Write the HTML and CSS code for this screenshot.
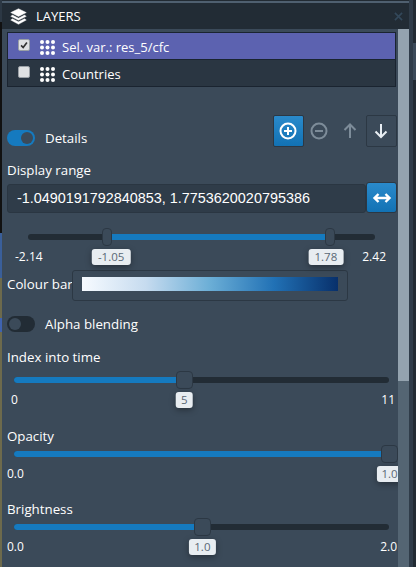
FILE: index.html
```html
<!DOCTYPE html>
<html lang="en">
    <head>
        <meta charset="UTF-8">
        <title>Layers</title>
        <link rel="stylesheet" href="styles.css">
    </head>
    <body>
        <div class="strip"></div>
        <div class="panel">
            <div class="head">
                <svg class="head-icon" viewBox="0 0 24 24"><g fill="#fff" stroke="#fff" stroke-width="0.6"><path d="M12 1 L23 6.5 L12 12 L1 6.5 Z"/><path d="M3.5 10 L12 14.3 L20.5 10 L23 11.8 L12 17.2 L1 11.8 Z"/><path d="M3.5 15.2 L12 19.5 L20.5 15.2 L23 17 L12 23 L1 17 Z"/></g></svg>
                <span class="head-title">LAYERS</span>
                <svg class="head-close" viewBox="0 0 10 10"><path d="M1 1 L9 9 M9 1 L1 9" stroke="#33485a" stroke-width="1.8"/></svg>
            </div>
            <div class="main">
                <div class="content">
                    <ul class="layers">
                        <li class="layer selected">
                            <span class="check"><svg viewBox="0 0 12 12"><path d="M2.5 6.5 L5 9 L9.5 3" fill="none" stroke="#333" stroke-width="2"/></svg></span>
                            <svg class="dots" viewBox="0 0 15 15"><g fill="#fff"><circle cx="2" cy="2" r="2"/><circle cx="7.5" cy="2" r="2"/><circle cx="13" cy="2" r="2"/><circle cx="2" cy="7.5" r="2"/><circle cx="7.5" cy="7.5" r="2"/><circle cx="13" cy="7.5" r="2"/><circle cx="2" cy="13" r="2"/><circle cx="7.5" cy="13" r="2"/><circle cx="13" cy="13" r="2"/></g></svg>
                            <span class="layer-name">Sel. var.: res_5/cfc</span>
                        </li>
                        <li class="layer">
                            <span class="check"></span>
                            <svg class="dots" viewBox="0 0 15 15"><g fill="#fff"><circle cx="2" cy="2" r="2"/><circle cx="7.5" cy="2" r="2"/><circle cx="13" cy="2" r="2"/><circle cx="2" cy="7.5" r="2"/><circle cx="7.5" cy="7.5" r="2"/><circle cx="13" cy="7.5" r="2"/><circle cx="2" cy="13" r="2"/><circle cx="7.5" cy="13" r="2"/><circle cx="13" cy="13" r="2"/></g></svg>
                            <span class="layer-name">Countries</span>
                        </li>
                    </ul>

                    <div class="tools">
                        <label class="switch-row">
                            <span class="switch on"></span>
                            <span>Details</span>
                        </label>
                        <div class="buttons">
                            <button class="tool primary"><svg viewBox="0 0 20 20"><circle cx="10" cy="10" r="7.5" fill="none" stroke="#fff" stroke-width="2"/><path d="M10 6 V14 M6 10 H14" stroke="#fff" stroke-width="2"/></svg></button>
                            <button class="tool flat"><svg viewBox="0 0 20 20"><circle cx="10" cy="10" r="7.5" fill="none" stroke="#7d8c99" stroke-width="2"/><path d="M6 10 H14" stroke="#7d8c99" stroke-width="2"/></svg></button>
                            <button class="tool flat"><svg viewBox="0 0 20 20"><path d="M10 17 V3.5 M4.5 9 L10 3.5 L15.5 9" fill="none" stroke="#7d8c99" stroke-width="2"/></svg></button>
                            <button class="tool outline"><svg viewBox="0 0 20 20"><path d="M10 3 V16 M4.5 10.5 L10 16 L15.5 10.5" fill="none" stroke="#e8eef3" stroke-width="2"/></svg></button>
                        </div>
                    </div>

                    <div class="label range-label">Display range</div>
                    <div class="range-row">
                        <div class="range-input">-1.0490191792840853, 1.7753620020795386</div>
                        <button class="range-btn"><svg viewBox="0 0 20 20"><path d="M3 10 H17 M6.5 6 L2.5 10 L6.5 14 M13.5 6 L17.5 10 L13.5 14" fill="none" stroke="#fff" stroke-width="2.4"/></svg></button>
                    </div>

                    <div class="slider slim">
                        <div class="track">
                            <div class="fill" style="left: 22.8%; width: 64.2%"></div>
                            <div class="thumb narrow" style="left: 22.8%"><span class="tip shift-right">-1.05</span></div>
                            <div class="thumb narrow" style="left: 87%"><span class="tip shift-left">1.78</span></div>
                        </div>
                        <div class="ends"><span>-2.14</span><span>2.42</span></div>
                    </div>

                    <div class="colour-row">
                        <span class="colour-label">Colour bar</span>
                        <div class="colour-box"><div class="colour-grad"></div></div>
                    </div>

                    <label class="switch-row alpha">
                        <span class="switch"></span>
                        <span>Alpha blending</span>
                    </label>

                    <div class="label time-label">Index into time</div>
                    <div class="slider wide">
                        <div class="track">
                            <div class="fill" style="left: 0; width: 45.3%"></div>
                            <div class="thumb" style="left: 45.3%"><span class="tip">5</span></div>
                        </div>
                        <div class="ends"><span>0</span><span>11</span></div>
                    </div>

                    <div class="label opacity-label">Opacity</div>
                    <div class="slider">
                        <div class="track">
                            <div class="fill" style="left: 0; width: 100%"></div>
                            <div class="thumb" style="left: 100%"><span class="tip">1.0</span></div>
                        </div>
                        <div class="ends"><span>0.0</span></div>
                    </div>

                    <div class="label bright-label">Brightness</div>
                    <div class="slider">
                        <div class="track">
                            <div class="fill" style="left: 0; width: 50.1%"></div>
                            <div class="thumb" style="left: 50.1%"><span class="tip">1.0</span></div>
                        </div>
                        <div class="ends"><span>0.0</span><span>2.0</span></div>
                    </div>
                </div>
                <div class="scrollbar"><div class="scroll-thumb"></div></div>
            </div>
        </div>
        <div class="gutter"></div>
    </body>
</html>
```

FILE: styles.css
```css
*{
    margin: 0;
    padding: 0;
    box-sizing: border-box;
}
html, body{
    height: 100%;
    overflow: hidden;
}
body{
    display: flex;
    background-color: #222b33;
    color: #fff;
    font-family: "Open Sans", "Noto Sans", sans-serif;
    font-size: 13px;
}
.strip{
    width: 2px;
    background: linear-gradient(#2c3844 0, #2c3844 22px, #111 22px, #111 233px, #3a5f9a 233px, #3a5f9a 278px, #6d6a4c 278px, #6d6a4c 318px, #3f63b0 318px, #3f63b0 332px, #6d6a4c 332px);
}
.panel{
    width: 407px;
    display: flex;
    flex-direction: column;
    background-color: #3b4a59;
    border-top: 1px solid #222b33;
}
.head{
    height: 28px;
    display: flex;
    align-items: center;
    padding: 0 6px 0 8px;
    background-color: #222c35;
    border-top: 2px solid #4f6070;
}
.head-icon{
    width: 17px;
    height: 17px;
}
.head-title{
    margin-left: 9px;
    font-size: 13px;
}
.head-close{
    width: 9px;
    height: 9px;
    margin-left: auto;
}
.main{
    flex: 1;
    display: flex;
    min-height: 0;
}
.content{
    width: 396px;
    overflow: hidden;
    padding: 3px 0 0 5px;
}
.scrollbar{
    width: 11px;
    background-color: #546573;
}
.scroll-thumb{
    height: 352px;
    background-color: #94a3af;
}
.gutter{
    flex: 1;
    background: linear-gradient(90deg, #2f3c49 0, #2f3c49 4px, transparent 4px), linear-gradient(#222b33 0, #222b33 43px, #3b4a59 43px, #3b4a59 80px, #222b33 80px);
}
.layers{
    list-style: none;
    width: 389px;
    border: 1px solid #1a2430;
}
.layer{
    height: 26px;
    display: flex;
    align-items: center;
    padding-left: 10px;
    background-color: #2a3642;
}
.layer + .layer{
    height: 27px;
    border-top: 1px solid #1a2430;
}
.layer.selected{
    background-color: #5c62b0;
}
.layer-name{
    padding-top: 2px;
}
.check{
    width: 12px;
    height: 12px;
    margin-top: -2px;
    background-color: #dfe1e3;
    border: 1px solid #9aa0a6;
    border-radius: 2px;
}
.check svg{
    display: block;
    width: 10px;
    height: 10px;
}
.dots{
    width: 15px;
    height: 15px;
    margin: 2px 7px 0 10px;
}
.tools{
    height: 32px;
    margin-top: 28px;
    display: flex;
    justify-content: space-between;
    align-items: flex-end;
    width: 390px;
}
.switch-row{
    display: flex;
    align-items: center;
    gap: 10px;
    font-size: 13.3px;
    line-height: 18px;
}
.switch{
    position: relative;
    width: 28px;
    height: 16px;
    border-radius: 8px;
    background-color: #222c35;
}
.switch::after{
    content: "";
    position: absolute;
    left: 2px;
    top: 2px;
    width: 12px;
    height: 12px;
    border-radius: 50%;
    background-color: #3b4a59;
}
.switch.on{
    background-color: #157abf;
}
.switch.on::after{
    left: 14px;
}
.buttons{
    display: flex;
}
.tool{
    width: 31px;
    height: 32px;
    padding-right: 1px;
    display: flex;
    align-items: center;
    justify-content: center;
    background: transparent;
    border: 1px solid transparent;
    border-radius: 2px;
}
.tool svg{
    width: 20px;
    height: 20px;
}
.tool.primary{
    background: linear-gradient(#2a8acb, #1272b4);
    border-color: #2c3844;
}
.tool.outline{
    border-color: #2c3844;
}
.label{
    font-size: 13.3px;
    line-height: 18px;
}
.range-label{
    margin-top: 14px;
}
.range-row{
    display: flex;
    align-items: flex-start;
    width: 390px;
    margin-top: 3px;
}
.range-input{
    width: 359px;
    height: 29px;
    line-height: 27px;
    padding-left: 9px;
    margin-top: 2px;
    background-color: #2f3c49;
    border: 1px solid #2a3642;
    border-radius: 3px;
    font-family: "Liberation Sans", Arial, sans-serif;
    font-size: 14.4px;
}
.range-btn{
    width: 31px;
    height: 31px;
    display: flex;
    align-items: center;
    justify-content: center;
    background: linear-gradient(#2a8acb, #1272b4);
    border: 1px solid #2c3844;
    border-radius: 3px;
}
.range-btn svg{
    width: 20px;
    height: 20px;
}
.slider{
    padding: 6px 0 0 7px;
    width: 382px;
}
.slider.wide{
    padding-top: 11px;
}
.slider.slim{
    padding: 21px 0 0 21px;
    width: 368px;
}
.track{
    position: relative;
    height: 6px;
    border-radius: 3px;
    background-color: #222c35;
}
.fill{
    position: absolute;
    top: 0;
    bottom: 0;
    border-radius: 3px;
    background-color: #157abf;
}
.thumb{
    position: absolute;
    top: -6px;
    width: 17px;
    height: 18px;
    margin-left: -8px;
    background-color: #3b4a59;
    border: 1px solid #2c3844;
    border-radius: 4px;
}
.thumb.narrow{
    width: 10px;
    margin-left: -5px;
}
.tip{
    position: absolute;
    top: 20px;
    left: 50%;
    transform: translateX(-50%);
    padding: 0 5px;
    height: 16px;
    line-height: 16px;
    font-size: 11.5px;
    color: #5a6875;
    background-color: #e8edf1;
    border-radius: 3px;
    box-shadow: 0 2px 6px rgba(0, 0, 0, 0.35);
}
.tip.shift-right{
    padding: 0 6px;
    margin-left: 4px;
}
.tip.shift-left{
    padding: 0 6px;
    margin-left: -4px;
}
.ends{
    display: flex;
    justify-content: space-between;
    margin: 9px -8px 0 -7px;
    font-size: 12px;
    line-height: 16px;
}
.wide .ends{
    margin: 9px -6px 0 -3px;
}
.slim .ends{
    margin: 9px -11px 0 -13px;
}
.colour-row{
    display: flex;
    align-items: flex-start;
    margin-top: 5px;
}
.colour-label{
    width: 65px;
    margin-top: 5px;
    font-size: 13.3px;
    line-height: 18px;
    white-space: nowrap;
}
.colour-box{
    width: 276px;
    height: 31px;
    padding: 6px 9px;
    border: 1px solid #2c3844;
    border-radius: 3px;
}
.colour-grad{
    height: 14px;
    background: linear-gradient(90deg, #f7fbff, #c6dbef 25%, #6baed6 50%, #2171b5 75%, #08306b);
}
.alpha{
    margin-top: 14px;
}
.time-label{
    margin-top: 15px;
}
.opacity-label{
    margin-top: 19px;
}
.bright-label{
    margin-top: 18px;
}
```
